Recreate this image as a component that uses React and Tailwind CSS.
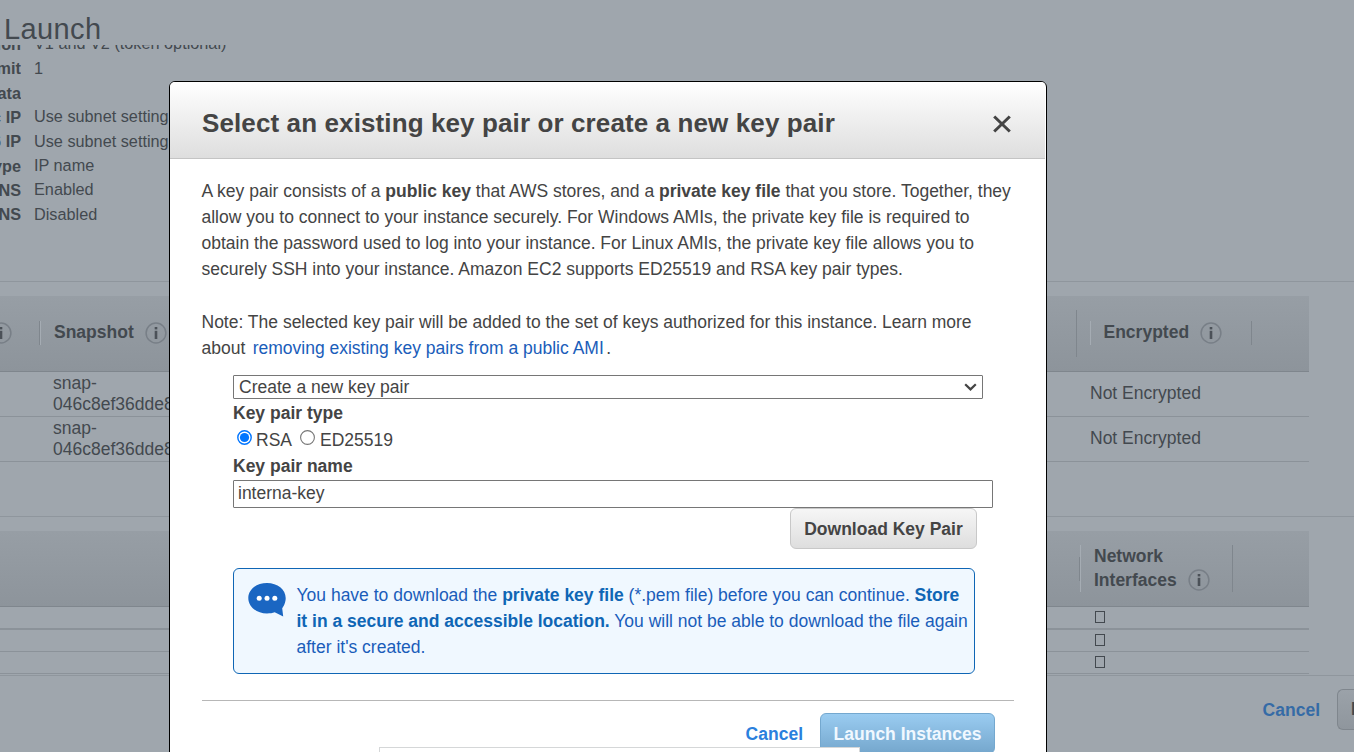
import React from "react";

const details = [
  ["version", "V1 and V2 (token optional)"],
  ["limit", "1"],
  ["data", ""],
  ["Public IP", "Use subnet setting"],
  ["IPv6 IP", "Use subnet setting"],
  ["type", "IP name"],
  ["DNS", "Enabled"],
  ["DNS", "Disabled"],
];

function Info() {
  return (
    <svg className="size-[22px] shrink-0" viewBox="0 0 22 22">
      <circle cx="11" cy="11" r="9.9" fill="none" stroke="#787f87" strokeWidth="1.5" />
      <rect x="9.7" y="5" width="2.6" height="2.4" fill="#4b5158" />
      <rect x="9.7" y="8.8" width="2.6" height="8.2" fill="#4b5158" />
    </svg>
  );
}

function VolumeRow() {
  return (
    <div className="flex h-[45px] w-[1309px] border-b border-[#8b9299]">
      <div className="ml-[53px] w-[1037px] pt-px leading-[21px]">
        snap-
        <br />
        046c8ef36dde8
      </div>
      <div className="pt-2 leading-[26px]">Not Encrypted</div>
    </div>
  );
}

function Page() {
  return (
    <div className="flex h-[752px] w-[1354px] flex-col overflow-hidden text-[17.5px] text-[#43494f]">
      <div className="h-[45px] shrink-0 pl-1 pt-[11px] text-[29px] leading-[36px] tracking-[0.4px]">
        Launch
      </div>
      <div className="h-[236px] shrink-0 overflow-hidden">
        <div className="-mt-[13.6px] flex flex-col text-[16.25px]">
          {details.map(([label, value], i) => (
            <div key={i} className="flex h-[24.35px] leading-[24.35px]">
              <div className="flex w-[21px] justify-end overflow-hidden whitespace-nowrap pt-[0.5px] font-bold">
                {label}
              </div>
              <div className="ml-[13px] whitespace-nowrap">{value}</div>
            </div>
          ))}
        </div>
      </div>
      <div className="h-[235px] shrink-0 border-t border-[#8f969d] pt-[14px]">
        <div className="flex h-[76px] w-[1309px] items-center border-b border-[#7f868d] bg-linear-to-b from-[#979ea5] to-[#8d949b] pb-px font-bold">
          <div className="-ml-[10px] flex">
            <Info />
          </div>
          <div className="ml-[27px] h-6 w-px bg-[#7f868d]" />
          <div className="h-6 w-px bg-[#a5acb3]" />
          <div className="mb-px ml-[13px] w-[91px]">Snapshot</div>
          <Info />
          <div className="ml-[909px] h-[47px] w-px bg-[#7f868d]" />
          <div className="ml-[13px] h-6 w-px bg-[#a5acb3]" />
          <div className="mb-px ml-[12.5px] w-[96.5px]">Encrypted</div>
          <Info />
          <div className="ml-[29px] h-6 w-px bg-[#7f868d]" />
        </div>
        <VolumeRow />
        <VolumeRow />
      </div>
      <div className="h-[159px] shrink-0 border-t border-[#8f969d] pt-[14px]">
        <div className="flex h-[76px] w-[1309px] items-center border-b border-[#7f868d] bg-linear-to-b from-[#979ea5] to-[#8d949b] font-bold">
          <div className="ml-[1079px] h-6 w-px bg-[#7f868d]" />
          <div className="h-[47px] w-px bg-[#a5acb3]" />
          <div className="mb-[2px] ml-[13px] leading-6">
            Network
            <div className="flex w-[116px] items-start justify-between">
              Interfaces
              <div className="mt-px flex h-[23px]">
                <Info />
              </div>
            </div>
          </div>
          <div className="ml-[22px] h-[47px] w-px bg-[#7f868d]" />
        </div>
        <div className="flex h-[23px] w-[1309px] border-b-2 border-[#8b9299] pl-[1095px] pt-[4px]">
          <div className="h-3 w-[10px] border border-[#43494f]" />
        </div>
        <div className="flex h-[22px] w-[1309px] border-b border-[#8b9299] pl-[1095px] pt-1">
          <div className="h-3 w-[10px] border border-[#43494f]" />
        </div>
        <div className="flex h-[22px] w-[1309px] border-b border-[#8b9299] pl-[1095px] pt-1">
          <div className="h-3 w-[10px] border border-[#43494f]" />
        </div>
      </div>
      <div className="flex h-[77px] shrink-0 justify-end border-t border-[#8f969d] pt-[13px] font-bold">
        <div className="mr-[17px] leading-[43px] text-[#356ba6]">Cancel</div>
        <div className="h-[41px] w-[17px] shrink-0 overflow-hidden rounded-l-md border border-r-0 border-[#7f868d] bg-linear-to-b from-[#9ba2a9] to-[#8f969d] pl-[13px] leading-[39px]">
          L
        </div>
      </div>
    </div>
  );
}

function Dialog() {
  return (
    <div className="absolute left-[169px] top-[81px] h-[690px] w-[878px] overflow-hidden rounded-md border border-black bg-white text-[17.5px] leading-[26.1px] text-[#444]">
      <div className="mr-px flex h-[77px] items-center justify-between border-b border-[#c4c4c4] bg-linear-to-b from-white to-[#dedede] pl-[32px] pr-[34px]">
        <h1 className="mt-[6px] whitespace-nowrap text-[26px] font-bold tracking-[0.11px]">
          Select an existing key pair or create a new key pair
        </h1>
        <svg className="mt-2 size-[18px]" viewBox="0 0 18 18">
          <path d="M1.2 1.5L16.8 16.5M16.8 1.5L1.2 16.5" stroke="#444" strokeWidth="3" />
        </svg>
      </div>
      <div className="whitespace-nowrap pl-8 pt-[19px]">
        <p className="-ml-[0.5px]">
          A key pair consists of a <b>public key</b> that AWS stores, and a <b>private key file</b> that you store. Together, they
          <br />
          allow you to connect to your instance securely. For Windows AMIs, the private key file is required to
          <br />
          obtain the password used to log into your instance. For Linux AMIs, the private key file allows you to
          <br />
          securely SSH into your instance. Amazon EC2 supports ED25519 and RSA key pair types.
        </p>
        <p className="-ml-[0.5px] mt-[27px]">
          Note: The selected key pair will be added to the set of keys authorized for this instance. Learn more
          <br />
          about <span className="ml-[2.5px] mr-[2.5px] text-[#1a5dba]">removing existing key pairs from a public AMI</span>.
        </p>
        <div className="ml-[31px]">
          <div className="mt-[13px] flex h-6 w-[750px] items-center justify-between rounded-[1px] border border-[#767676] pl-[5px] pr-[5px]">
            Create a new key pair
            <svg className="h-[8px] w-[13px]" viewBox="0 0 13 8">
              <path d="M1.2 1.2L6.5 6.4L11.8 1.2" fill="none" stroke="#444" strokeWidth="2.2" />
            </svg>
          </div>
          <div className="mt-px font-bold">Key pair type</div>
          <div className="flex h-[27px]">
            <svg className="ml-1 mt-[4px] size-[15px]" viewBox="0 0 15 15">
              <circle cx="7.5" cy="7.5" r="6.7" fill="#fff" stroke="#0075ff" strokeWidth="1.4" />
              <circle cx="7.5" cy="7.5" r="4.6" fill="#0075ff" />
            </svg>
            <span className="ml-[4px] mt-px w-[44px]">RSA</span>
            <svg className="mt-[4px] size-[15px]" viewBox="0 0 15 15">
              <circle cx="7.5" cy="7.5" r="6.9" fill="#fff" stroke="#767676" strokeWidth="1.1" />
            </svg>
            <span className="ml-[5px] mt-px">ED25519</span>
          </div>
          <div className="font-bold">Key pair name</div>
          <div className="mt-px flex h-7 w-[760px] items-center rounded-[1px] border border-[#767676] pb-px pl-1">
            interna-key
          </div>
          <div className="ml-[557px] flex h-[41px] w-[187px] items-center justify-center rounded-md border border-[#c8c8c8] bg-linear-to-b from-[#f6f6f6] to-[#dedede] pt-[2px] font-bold">
            Download Key Pair
          </div>
          <div className="mt-[19px] flex h-[106px] w-[742px] rounded-md border border-[#0f66b5] bg-[#f0f8ff] pt-[13px] text-[#1a5dba]">
            <svg className="ml-[14px] h-[35px] w-[38px] shrink-0" viewBox="0 0 38 35">
              <path
                d="M19 1C29.5 1 37.7 7.5 37.7 16C37.7 20.7 35.6 24.6 34.2 26.2L35.2 34.5L26.7 30.2C24.5 31 22 31.4 19 31.4C8.4 31.4.3 24.6.3 16C.3 7.5 8.4 1 19 1Z"
                fill="#1a66c2"
              />
              <circle cx="11.2" cy="16.3" r="2.5" fill="#fff" />
              <circle cx="19" cy="16.3" r="2.5" fill="#fff" />
              <circle cx="26.8" cy="16.3" r="2.5" fill="#fff" />
            </svg>
            <p className="ml-[10.5px]">
              You have to download the <b className="text-[#0f66b5]">private key file</b> (*.pem file) before you can continue. <b className="text-[#0f66b5]">Store</b>
              <br />
              <b className="text-[#0f66b5]">it in a secure and accessible location.</b> You will not be able to download the file again
              <br />
              after it's created.
            </p>
          </div>
        </div>
        <div className="mt-[26px] h-px w-[812px] bg-[#b7b7b7]" />
        <div className="flex w-[793px] justify-end pt-3 font-bold">
          <div className="mr-[17px] leading-[43px] text-[#2a80dd]">Cancel</div>
          <div className="h-[41px] w-[175px] rounded-md border border-[#74a8cf] bg-linear-to-b from-[#9accf1] to-[#75a7cd] text-center leading-[41px] text-[#f0f8ff]">
            Launch Instances
          </div>
        </div>
      </div>
    </div>
  );
}

export default function App() {
  return (
    <div className="relative h-[752px] w-[1354px] overflow-hidden bg-[#9fa6ad] font-['Liberation_Sans',Arial,sans-serif]">
      <Page />
      <Dialog />
      <div className="absolute left-[379px] top-[747px] h-[10px] w-[481px] border border-[#d5d7d8] bg-white" />
    </div>
  );
}
